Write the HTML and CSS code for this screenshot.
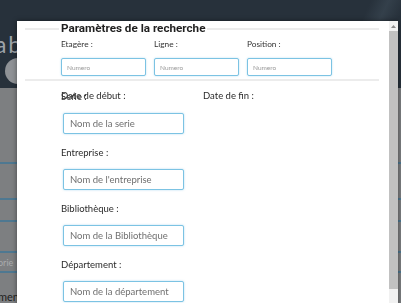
FILE: index.html
```html
<!DOCTYPE html>
<html lang="fr">
<head>
<meta charset="utf-8">
<title>Paramètres de la recherche</title>
<link rel="stylesheet" href="styles.css">
</head>
<body>
<div class="page">
  <header class="bg-header">
    <div class="logo">a b</div>
    <div class="logo-disc"></div>
  </header>
  <div class="bg-rows">
    <div class="bg-row r1"></div>
    <div class="bg-row r2"></div>
    <div class="bg-row r3"></div>
    <div class="bg-row r4"></div>
    <div class="bg-row r5"><span class="faint">orie</span></div>
    <div class="bg-row r6"><span class="strong">men</span></div>
  </div>
</div>

<div class="modal">
  <div class="modal-body">
    <fieldset class="params">
      <legend>Paramètres de la recherche</legend>
      <div class="params-grid">
        <div class="field-sm">
          <label>Etagère :</label>
          <input type="text" placeholder="Numero">
        </div>
        <div class="field-sm">
          <label>Ligne :</label>
          <input type="text" placeholder="Numero">
        </div>
        <div class="field-sm">
          <label>Position :</label>
          <input type="text" placeholder="Numero">
        </div>
      </div>
    </fieldset>

    <div class="form">
      <div class="stack">
        <div class="date-row">
          <label class="date-col">Date de début :</label>
          <label class="date-col">Date de fin :</label>
        </div>
        <label class="lbl serie">Serie :</label>
      </div>
      <input class="txt" type="text" placeholder="Nom de la serie">
      <label class="lbl">Entreprise :</label>
      <input class="txt" type="text" placeholder="Nom de l'entreprise">
      <label class="lbl">Bibliothèque :</label>
      <input class="txt" type="text" placeholder="Nom de la Bibliothèque">
      <label class="lbl">Département :</label>
      <input class="txt" type="text" placeholder="Nom de la département">
    </div>
  </div>
  <div class="scrollbar">
    <div class="sb-btn"><svg width="5" height="3" viewBox="0 0 5 3"><path d="M0 3 L2.5 0 L5 3 Z" fill="#8a8a8a"/></svg></div>
    <div class="sb-thumb"></div>
    <div class="sb-btn"></div>
  </div>
</div>
</body>
</html>
```

FILE: styles.css
```css
html, body {
  margin: 0;
  padding: 0;
  height: 100%;
  overflow: hidden;
}
body {
  font-family: "Lato", "Liberation Sans", sans-serif;
  background: #7d7f81;
}
.page {
  display: flex;
  flex-direction: column;
  height: 100%;
}
.bg-header {
  height: 88px;
  background: linear-gradient(115deg, #27313b 0%, #27313b 84%, #34404b 88%, #27313b 92%);
  display: flex;
  flex-direction: column;
  padding-top: 33px;
  box-sizing: border-box;
}
.logo {
  font-size: 23px;
  line-height: 22px;
  color: #9ea3a8;
  word-spacing: -4px;
  margin-left: -5px;
}
.logo-disc {
  width: 26px;
  height: 26px;
  border-radius: 50%;
  background: #8f9296;
  margin: 3px 0 0 5px;
}
.bg-rows {
  display: flex;
  flex-direction: column;
}
.bg-row {
  border-bottom: 2px solid #4e7891;
  box-sizing: border-box;
  font-size: 9px;
}
.r1 { height: 76px; }
.r2 { height: 36px; }
.r3 { height: 22px; }
.r4 { height: 31px; }
.r5 { height: 20px; display: flex; align-items: center; }
.r6 { height: 30px; border: 0; display: flex; align-items: flex-end; }
.faint { color: #a9abad; margin-left: -2px; }
.strong { color: #1d1d1d; font-size: 11px; margin-left: -2px; }

/* modal */
.modal {
  position: fixed;
  left: 17px;
  top: 21px;
  right: 3px;
  bottom: -10px;
  display: flex;
  background: #fff;
  box-shadow: 0 0 5px rgba(0, 0, 0, 0.45);
}
.modal-body {
  flex: 1;
  display: flex;
  flex-direction: column;
  overflow: hidden;
}
.scrollbar {
  width: 9px;
  display: flex;
  flex-direction: column;
  background: #f1f1f1;
}
.sb-btn {
  height: 10px;
  display: flex;
  align-items: center;
  justify-content: center;
}
.sb-thumb {
  flex: 1;
  background: #c1c1c1;
  margin: 0 0 14px 0;
}

.params {
  margin: 0 10px 0 8px;
  padding: 0 0 3px 36px;
  border: 0;
  border-top: 2px solid #ececec;
  border-bottom: 2px solid #ececec;
  min-width: 0;
}
.params legend {
  font-family: "Roboto", "Liberation Sans", sans-serif;
  font-weight: 700;
  font-size: 11.7px;
  line-height: 15px;
  color: #1f1f1f;
  padding: 0 2px;
  margin-left: -2px;
}
.params-grid {
  display: grid;
  grid-template-columns: 85px 85px 85px;
  column-gap: 8px;
  margin-top: 3px;
}
.field-sm {
  display: flex;
  flex-direction: column;
}
.field-sm label {
  font-size: 8.3px;
  line-height: 10px;
  color: #333;
  margin-bottom: 9px;
}
.field-sm input {
  box-sizing: border-box;
  height: 18px;
  border: 1px solid #7cc3e3;
  border-radius: 2px;
  padding: 0 5px;
  font-family: "Lato", sans-serif;
  font-size: 6.5px;
  color: #555;
  box-shadow: 0 0 2px rgba(90, 180, 225, 0.45);
  outline: none;
}
.field-sm input::placeholder { color: #9a9a9a; }

.form {
  display: flex;
  flex-direction: column;
  align-items: flex-start;
  padding: 9px 0 0 44px;
}
.stack {
  display: grid;
}
.stack > * {
  grid-area: 1 / 1;
}
.date-row {
  display: flex;
}
.date-col {
  width: 142px;
  font-size: 9.5px;
  line-height: 12px;
  color: #2b2b2b;
}
.lbl {
  font-size: 9.5px;
  line-height: 12px;
  color: #2b2b2b;
  margin-top: 13px;
}
.serie {
  margin-top: 1px;
}
.txt {
  box-sizing: border-box;
  width: 121px;
  height: 21px;
  margin: 10px 0 0 2px;
  border: 1px solid #7cc3e3;
  border-radius: 2px;
  padding: 0 6px;
  font-family: "Lato", sans-serif;
  font-size: 9.5px;
  color: #555;
  box-shadow: 0 0 2px rgba(90, 180, 225, 0.5);
  outline: none;
}
.txt::placeholder { color: #6f6f6f; }
```
